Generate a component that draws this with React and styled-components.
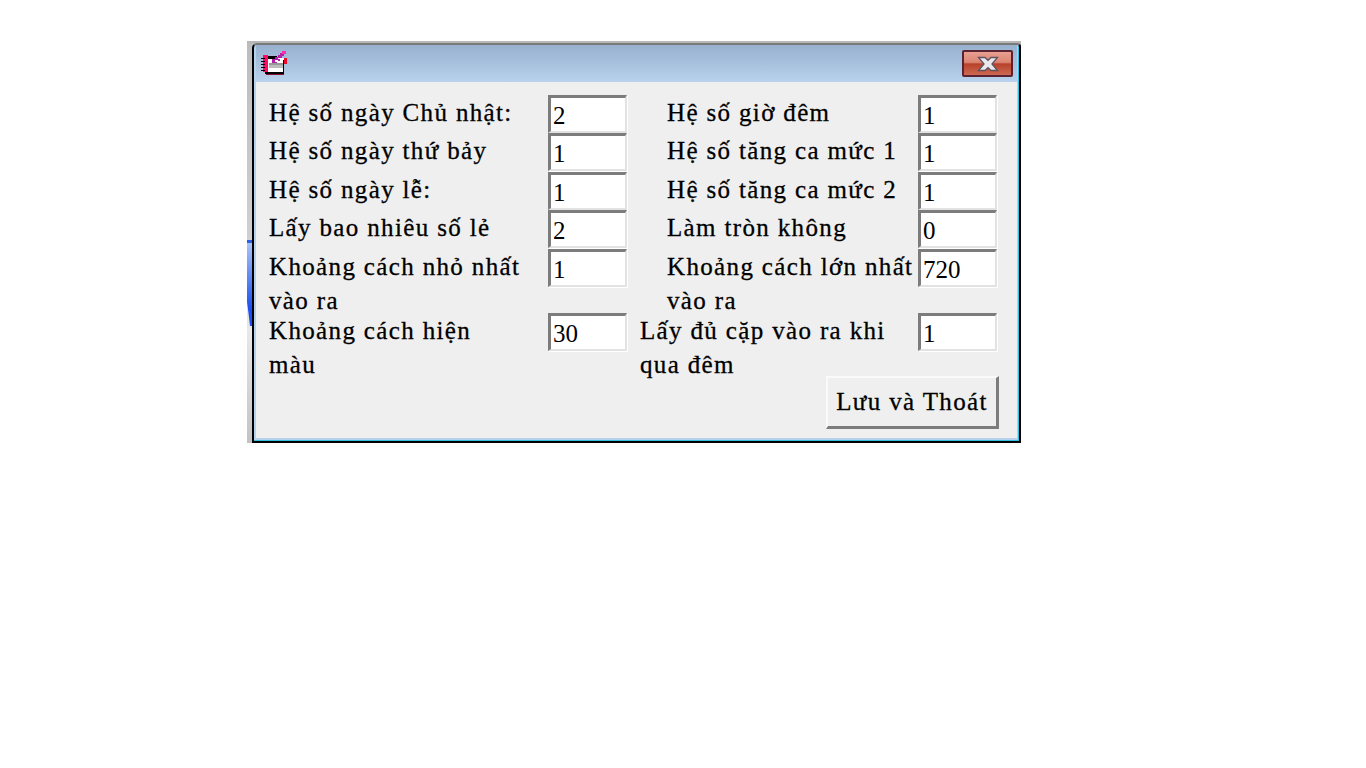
import styled, { createGlobalStyle } from 'styled-components'

const GlobalStyle = createGlobalStyle`
    html, body {
        margin: 0;
        background: #fff;
    }
`
const Page = styled.div`
    padding: 41px 0 0 247px;
`
const Frame = styled.div`
    position: relative;
    width: 774px;
    height: 402px;
    display: flex;
    flex-direction: column;
    background: linear-gradient(#bcbcbc 0%, #cfcfcf 48%, #e8e8e8 72%, #c2c2c2 100%);
    &::before {
        content: '';
        position: absolute;
        left: 0;
        top: 199px;
        width: 5px;
        height: 86px;
        background: linear-gradient(#2b5fe8 0, #2b5fe8 3px, #aac4f6 3px, #1b4ff0 80%);
        clip-path: polygon(0 0, 100% 0, 100% 100%, 60% 100%, 30% 85%, 0 72%);
    }
`
const TopEdge = styled.div`
    height: 2px;
    background: #b8b8b8;
`
const Body = styled.div`
    flex: 1;
    display: flex;
    flex-direction: column;
    margin-left: 5px;
    border: 2px solid #000;
    border-top: 2px solid #7a7a7a;
    border-radius: 5px 4px 0 0;
    background: #b6d1ec;
    box-shadow: inset -1px -1px 0 #34bfe0;
    padding: 0 2px 3px 2px;
`
const TitleBar = styled.div`
    height: 37px;
    flex: none;
    display: flex;
    align-items: center;
    justify-content: space-between;
    padding: 0 4px 0 5px;
    background: linear-gradient(#97b1cf, #b8d1ec);
`
const CloseButton = styled.button`
    width: 51px;
    height: 27px;
    padding: 0;
    display: flex;
    align-items: center;
    justify-content: center;
    border: 2px solid #5b2233;
    border-radius: 2px;
    background: linear-gradient(#e99f90 0%, #db8573 45%, #b8412a 52%, #cd6a53 100%);
`
const Content = styled.div`
    flex: 1;
    background: #efefef;
    padding: 13px 18px 0 13px;
`
const Row = styled.div`
    display: grid;
    grid-template-columns: 279px 80px 290px 80px;
    height: ${p => p.$height}px;
`
const Label = styled.div`
    font-family: "Liberation Serif", serif;
    font-size: 25px;
    line-height: 34px;
    letter-spacing: 1.35px;
    color: #000;
    -webkit-text-stroke: 0.3px #000;
    padding-left: ${p => p.$indent || 0}px;
    margin-top: 1px;
    white-space: pre-line;
`
const Field = styled.div`
    width: 79px;
    height: 38px;
    box-sizing: border-box;
    padding: 3px 0 0 2px;
    background: #fff;
    border-style: solid;
    border-width: 3px 2px 2px 3px;
    border-color: #7c7c7c #e2e2e2 #e2e2e2 #7c7c7c;
    box-shadow: 1px 1px 0 #fff;
    font-family: "Liberation Serif", serif;
    font-size: 25px;
    line-height: 30px;
    color: #000;
`
const Footer = styled.div`
    display: flex;
    justify-content: flex-end;
    margin-top: -1px;
`
const SaveButton = styled.button`
    width: 173px;
    height: 53px;
    padding: 0;
    background: #efefef;
    border-style: solid;
    border-width: 2px 3px 3px 2px;
    border-color: #fafafa #7c7c7c #7c7c7c #fafafa;
    font-family: "Liberation Serif", serif;
    font-size: 25px;
    letter-spacing: 1.35px;
    -webkit-text-stroke: 0.3px #000;
    color: #000;
`

const rows = [
    { height: 38.4, left: 'Hệ số ngày Chủ nhật:', a: '2', right: 'Hệ số giờ đêm', b: '1' },
    { height: 38.4, left: 'Hệ số ngày thứ bảy', a: '1', right: 'Hệ số tăng ca mức 1', b: '1' },
    { height: 38.4, left: 'Hệ số ngày lễ:', a: '1', right: 'Hệ số tăng ca mức 2', b: '1' },
    { height: 38.4, left: 'Lấy bao nhiêu số lẻ', a: '2', right: 'Làm tròn không', b: '0' },
    { height: 64, left: 'Khoảng cách nhỏ nhất\nvào ra', a: '1', right: 'Khoảng cách lớn nhất\nvào ra', b: '720' },
    { height: 64, left: 'Khoảng cách hiện\nmàu', a: '30', right: 'Lấy đủ cặp vào ra khi\nqua đêm', b: '1', wide: true },
]

function NoteIcon() {
    return (
        <svg width="26" height="25" viewBox="0 0 26 25" shapeRendering="crispEdges" style={{ marginBottom: 1 }}>
            <path d="M7 7h16v14H7z" fill="#fff" />
            <path d="M8 12h14v2H8z" fill="#989898" />
            <path d="M8 14h14v3H8z" fill="#bcbcbc" />
            <path d="M7 5h9v3H7zM22 9h1v12h-1zM4 21h19v2H4z" fill="#000" />
            <path d="M5 23h18v1H5z" fill="#8a0f2c" />
            <path d="M2 4h5v17H2z" fill="#ff0a64" />
            <path d="M0 7h4v1H0zM0 10h4v1H0zM0 13h4v1H0zM0 16h4v1H0zM0 19h4v1H0z" fill="#000" />
            <path d="M23 7h3v6h-3z" fill="#ee0828" />
            <path d="M11 8h5v4h-5zM14 6h5v4h-5zM17 4h4v3h-4zM19 2h4v3h-4z" fill="#b81ea8" />
            <path d="M21 0h4v3h-4z" fill="#ff2bb0" />
            <path d="M14 9h3v2h-3zM17 7h2v1h-2z" fill="#fff" />
        </svg>
    )
}

function CloseIcon() {
    return (
        <svg width="22" height="16" viewBox="0 0 22 16">
            <path d="M1.500 1.500h6.500l3 2.800 3-2.800h6.500l-5.500 6.500 5.500 6.500h-6.500l-3-2.800-3 2.800H1.500l5.500-6.500z" fill="#e9e9ec" stroke="#5c5262" strokeWidth="1.300" />
        </svg>
    )
}

export default function App() {
    return (
        <Page>
            <GlobalStyle />
            <Frame>
                <TopEdge />
                <Body>
                    <TitleBar>
                        <NoteIcon />
                        <CloseButton aria-label="Đóng"><CloseIcon /></CloseButton>
                    </TitleBar>
                    <Content>
                        {rows.map((row) => (
                            <Row key={row.left} $height={row.height}>
                                <Label>{row.left}</Label>
                                <Field>{row.a}</Field>
                                <Label $indent={row.wide ? 12 : 39}>{row.right}</Label>
                                <Field>{row.b}</Field>
                            </Row>
                        ))}
                        <Footer>
                            <SaveButton>Lưu và Thoát</SaveButton>
                        </Footer>
                    </Content>
                </Body>
            </Frame>
        </Page>
    )
}
